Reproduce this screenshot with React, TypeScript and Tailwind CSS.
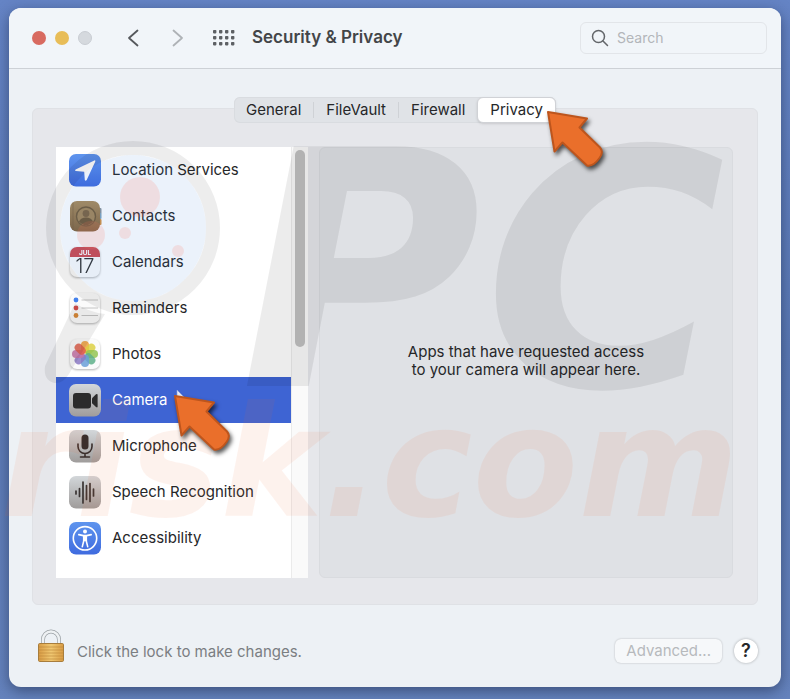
import React, { useState } from 'react';

interface Service {
  id: string;
  label: string;
  icon: React.ReactNode;
}

const TABS = ['General', 'FileVault', 'Firewall', 'Privacy'];

function GreyTile({ id, children }: { id: string; children: React.ReactNode }) {
  return (
    <svg viewBox="0 0 34 34" className="size-[34px]" aria-hidden="true">
      <defs>
        <linearGradient id={id} x1="0" y1="0" x2="0" y2="1">
          <stop offset="0" stopColor="#d3d7da" />
          <stop offset="1" stopColor="#9f9c9b" />
        </linearGradient>
      </defs>
      <rect x="1" y="1" width="32" height="32.5" rx="7" fill={`url(#${id})`} />
      {children}
    </svg>
  );
}

function BlueTile({ id, children }: { id: string; children: React.ReactNode }) {
  return (
    <svg viewBox="0 0 34 34" className="size-[34px]" aria-hidden="true">
      <defs>
        <linearGradient id={id} x1="0" y1="0" x2="0" y2="1">
          <stop offset="0" stopColor="#5f95ee" />
          <stop offset="1" stopColor="#3f6bdf" />
        </linearGradient>
      </defs>
      <rect x="1" y="1" width="32" height="32.5" rx="7" fill={`url(#${id})`} />
      {children}
    </svg>
  );
}

function WhiteTile({ children }: { children: React.ReactNode }) {
  return (
    <svg viewBox="0 0 34 34" className="size-[34px] drop-shadow-[0_1px_1px_rgba(0,0,0,0.3)]" aria-hidden="true">
      <rect x="2" y="2" width="30" height="30" rx="7" fill="#fbfbfb" />
      {children}
    </svg>
  );
}

const PETALS = ['#f0a03c', '#dcd044', '#93c452', '#5fb08a', '#6a9fd8', '#8b79c4', '#c874a8', '#e0604c'];

const SERVICES: Service[] = [
  {
    id: 'location',
    label: 'Location Services',
    icon: (
      <BlueTile id="tile-location">
        <path d="M26.3 7.4 7.6 16.4q-1.4 1.2.3 1.6l8.3.7.6 8.3q.7 1.5 1.9 0L27.3 8.4q.2-1.4-1-1Z" fill="#fff" />
      </BlueTile>
    ),
  },
  {
    id: 'contacts',
    label: 'Contacts',
    icon: (
      <svg viewBox="0 0 34 34" className="size-[34px]" aria-hidden="true">
        <defs>
          <linearGradient id="tile-contacts" x1="0" y1="0" x2="0" y2="1">
            <stop offset="0" stopColor="#ab8c5c" />
            <stop offset="1" stopColor="#84643c" />
          </linearGradient>
        </defs>
        <rect x="29" y="9" width="4.5" height="6" rx="1" fill="#8a949b" />
        <rect x="29" y="14" width="4.5" height="6" rx="1" fill="#7fa3bd" />
        <rect x="29" y="20" width="4.5" height="6" rx="1" fill="#d29042" />
        <rect x="2" y="2" width="30" height="30.5" rx="7" fill="url(#tile-contacts)" />
        <path d="M5 3.5V31" stroke="#775a36" strokeWidth="1" opacity=".5" />
        <circle cx="18" cy="17.5" r="9.5" fill="#a48659" stroke="#715a38" strokeWidth="1.4" />
        <circle cx="18" cy="14.5" r="3.4" fill="#7d6340" />
        <path d="M11 22.5q2-4 7-4t7 4q-3 3.7-7 3.7t-7-3.7Z" fill="#705735" />
      </svg>
    ),
  },
  {
    id: 'calendars',
    label: 'Calendars',
    icon: (
      <WhiteTile>
        <path d="M2 12V9a7 7 0 0 1 7-7h16a7 7 0 0 1 7 7v3Z" fill="#cf4a50" />
        <text x="17" y="9.5" textAnchor="middle" fontFamily="Inter, sans-serif" fontSize="6.5" fontWeight="700" fill="#fff">
          JUL
        </text>
        <text x="17" y="28" textAnchor="middle" fontFamily="Inter, sans-serif" fontSize="20" fontWeight="300" fill="#333">
          17
        </text>
      </WhiteTile>
    ),
  },
  {
    id: 'reminders',
    label: 'Reminders',
    icon: (
      <WhiteTile>
        <circle cx="8" cy="9" r="2.4" fill="#4381ec" />
        <circle cx="8" cy="17" r="2.4" fill="#d64f4b" />
        <circle cx="8" cy="24.5" r="2.4" fill="#d98a3b" />
        <path d="M13.5 9H30M13.5 17H30M13.5 24.5H30" stroke="#c4c4c4" strokeWidth="1" />
      </WhiteTile>
    ),
  },
  {
    id: 'photos',
    label: 'Photos',
    icon: (
      <WhiteTile>
        {PETALS.map((color, i) => (
          <rect
            key={color}
            x="13"
            y="4"
            width="8"
            height="12.4"
            rx="4"
            fill={color}
            opacity=".85"
            transform={`rotate(${i * 45} 17 17)`}
          />
        ))}
      </WhiteTile>
    ),
  },
  {
    id: 'camera',
    label: 'Camera',
    icon: (
      <GreyTile id="tile-camera">
        <rect x="5" y="10" width="18" height="15.5" rx="3" fill="#2b2b2b" />
        <path d="M24 15.2 28 11.3q1.6-1 1.6.7v11.4q0 1.7-1.6.7L24 20.3Z" fill="#2b2b2b" />
      </GreyTile>
    ),
  },
  {
    id: 'microphone',
    label: 'Microphone',
    icon: (
      <GreyTile id="tile-microphone">
        <rect x="13.5" y="5.5" width="7" height="15" rx="3.5" fill="#3a2e2b" />
        <path d="M10 15v2.5a7 7 0 0 0 14 0V15M17 24.5V28M12.5 28h9" fill="none" stroke="#3a2e2b" strokeWidth="1.6" strokeLinecap="round" />
      </GreyTile>
    ),
  },
  {
    id: 'speech',
    label: 'Speech Recognition',
    icon: (
      <GreyTile id="tile-speech">
        <path
          d="M8 16v3M11.5 13.5v8M15 7v21M18.5 10.5v14M22 8.5v18M25.5 14v7"
          stroke="#3a3433"
          strokeWidth="1.7"
          strokeLinecap="round"
        />
      </GreyTile>
    ),
  },
  {
    id: 'accessibility',
    label: 'Accessibility',
    icon: (
      <BlueTile id="tile-accessibility">
        <circle cx="17" cy="17.3" r="11.7" fill="none" stroke="#fff" strokeWidth="1.6" />
        <circle cx="17" cy="10.6" r="2" fill="#fff" />
        <path
          d="M10.8 13.6 15.4 14.6h3.2L23.2 13.6M15.8 19.6 14.3 25.6M18.2 19.6 19.7 25.6"
          fill="none"
          stroke="#fff"
          strokeWidth="1.6"
          strokeLinecap="round"
          strokeLinejoin="round"
        />
        <path d="M14.9 14.2h4.2v6h-4.2Z" fill="#fff" />
      </BlueTile>
    ),
  },
];

function PointerArrow({ className }: { className: string }) {
  return (
    <svg
      viewBox="0 0 64 66"
      className={`pointer-events-none absolute z-20 h-[66px] w-16 drop-shadow-[2px_3px_2px_rgba(0,0,0,0.65)] ${className}`}
      aria-hidden="true"
    >
      <path
        d="M4 5 43 11.5 35.5 20.5 56 40.5Q60 45 55.5 51 49 60 43 58.5L18.5 35.5 10.5 44.5Z"
        fill="#ea6f2b"
        stroke="#bd551d"
        strokeWidth="2"
        strokeLinejoin="round"
      />
    </svg>
  );
}

function Watermark() {
  return (
    <svg viewBox="0 0 790 699" className="pointer-events-none absolute inset-0 z-10 h-full w-full" aria-hidden="true">
      <circle cx="133" cy="228" r="73" fill="#3c82dc" opacity=".1" />
      <circle cx="133" cy="228" r="80" fill="none" stroke="#000" strokeWidth="14" opacity=".07" />
      <path d="M75 303 45 366Q43 380 54 383q9 1 15-9l36-60Q88 312 75 303Z" opacity=".07" />
      <g fill="#ff6e55" opacity=".15">
        <circle cx="140" cy="197" r="20" />
        <circle cx="91" cy="235" r="14" />
        <circle cx="125" cy="233" r="6" />
        <circle cx="178" cy="251" r="6" />
      </g>
      <g fontFamily="'DejaVu Sans', sans-serif" fontWeight="700" fontStyle="italic">
        <text x="240" y="386" fontSize="329" opacity=".07">P</text>
        <text x="484" y="386" fontSize="329" opacity=".07">C</text>
        <text x="0" y="516" fontSize="154" fill="#f0642d" opacity=".08">risk.com</text>
      </g>
    </svg>
  );
}

function TitleBar() {
  return (
    <header className="flex h-[61px] items-center rounded-t-xl border-b border-[#cdd1d6] bg-[#f1f5f9] pr-3.5 pl-[23px]">
      <div className="flex gap-[9px]">
        <button type="button" aria-label="Close" className="size-3.5 rounded-full bg-[#d86a60]" />
        <button type="button" aria-label="Minimize" className="size-3.5 rounded-full bg-[#e8bd58]" />
        <button type="button" aria-label="Zoom" className="size-3.5 rounded-full border border-[#c9cdd3] bg-[#d5d9de]" />
      </div>
      <div className="ml-8 flex gap-6">
        <button type="button" aria-label="Back">
          <svg viewBox="0 0 20 20" className="size-5" fill="none" stroke="#55585c" strokeWidth="1.8" strokeLinecap="round" strokeLinejoin="round">
            <path d="M13.5 2.5 5 10l8.5 7.5" />
          </svg>
        </button>
        <button type="button" aria-label="Forward" disabled>
          <svg viewBox="0 0 20 20" className="size-5" fill="none" stroke="#aeb2b6" strokeWidth="1.8" strokeLinecap="round" strokeLinejoin="round">
            <path d="M5.5 2.5 14 10 5.5 17.5" />
          </svg>
        </button>
      </div>
      <button type="button" aria-label="Show all" className="ml-[25px]">
        <svg viewBox="0 0 22 16" className="h-4 w-[22px]" fill="#5d6064">
          {[0, 6, 12].map((y) =>
            [0, 6, 12, 18].map((x) => <rect key={`${x}-${y}`} x={x} y={y} width="3.4" height="3.4" rx=".8" />)
          )}
        </svg>
      </button>
      <h1 className="ml-[17px] text-[17px] font-semibold text-[#434548]">Security &amp; Privacy</h1>
      <label className="ml-auto flex h-8 w-[187px] items-center gap-2 rounded-md border border-[#e2e5e9] px-2.5">
        <svg viewBox="0 0 18 18" className="size-[18px] shrink-0" fill="none" stroke="#63666a" strokeWidth="1.5" strokeLinecap="round">
          <circle cx="7.5" cy="7.5" r="6" />
          <path d="m12 12 4.5 4.5" />
        </svg>
        <input
          type="search"
          aria-label="Search"
          placeholder="Search"
          className="w-full min-w-0 bg-transparent text-sm outline-none placeholder:text-[#b3b6ba]"
        />
      </label>
    </header>
  );
}

function LockIcon() {
  return (
    <svg viewBox="0 0 28 34" className="h-[34px] w-7" aria-hidden="true">
      <defs>
        <linearGradient id="lock-body" x1="0" y1="0" x2="1" y2="0">
          <stop offset="0" stopColor="#d99c44" />
          <stop offset=".5" stopColor="#f0c872" />
          <stop offset="1" stopColor="#d99c44" />
        </linearGradient>
      </defs>
      <path d="M6 15v-4.5a8 8 0 0 1 16 0V15" fill="none" stroke="#999fa3" strokeWidth="4" />
      <path d="M6 15v-4.5a8 8 0 0 1 16 0V15" fill="none" stroke="#eef1f3" strokeWidth="2.6" />
      <rect x="1.5" y="14.5" width="25" height="18" rx="1.2" fill="url(#lock-body)" stroke="#a87d3c" />
      <path d="M2 18h24M2 21h24M2 24h24M2 27h24M2 30h24" stroke="#b98338" strokeWidth=".8" opacity=".75" />
    </svg>
  );
}

export default function App() {
  const [tab, setTab] = useState('Privacy');
  const [selected, setSelected] = useState('camera');

  return (
    <div className="relative min-h-screen bg-linear-to-b from-[#6584c5] via-[#5a79b4] to-[#6583bd] px-[9px] pt-2 pb-3 font-[Inter,sans-serif] text-[#262729]">
      <main className="rounded-xl bg-[#edf1f5] shadow-[0_4px_14px_rgba(20,30,60,0.5)]">
        <TitleBar />

        <div className="px-[23px] pt-7 pb-6">
          <div role="tablist" className="relative mx-auto -mb-[15px] flex h-[26px] w-fit rounded-md bg-[#e0e3e7] ring-1 ring-[#d9dce0] ring-inset">
            {TABS.map((name, i) => (
              <div key={name} className="relative flex items-center">
                {i > 0 && i < TABS.length - 1 && <span className="h-4 w-px bg-[#cfd2d6]" />}
                <button
                  type="button"
                  role="tab"
                  aria-selected={tab === name}
                  onClick={() => setTab(name)}
                  className={
                    tab === name
                      ? 'h-full rounded-md border border-[#d0d2d6] bg-white px-3 text-[15px] shadow-sm'
                      : 'h-full px-3 text-[15px]'
                  }
                >
                  {name}
                </button>
                {name === 'Privacy' && <PointerArrow className="top-2.5 left-[67px]" />}
              </div>
            ))}
          </div>

          <section className="flex gap-[11px] rounded-md border border-[#dfe1e5] bg-[#e6e7eb] pt-[38px] pr-6 pb-[26px] pl-[23px]">
            <div className="flex w-[252px] shrink-0 bg-white">
              <ul className="flex-1 pb-[17px]">
                {SERVICES.map(({ id, label, icon }) => (
                  <li key={id} className="relative">
                    <button
                      type="button"
                      onClick={() => setSelected(id)}
                      className={
                        selected === id
                          ? 'flex h-[46px] w-full items-center gap-2.5 bg-[#3e64d3] pl-3 text-left text-[15px] text-white'
                          : 'flex h-[46px] w-full items-center gap-2.5 pl-3 text-left text-[15px]'
                      }
                    >
                      {icon}
                      {label}
                    </button>
                    {id === 'camera' && (
                      <>
                        <svg viewBox="0 0 12 18" className="absolute top-3 left-[120px] h-[18px] w-3" aria-hidden="true">
                          <path d="M1 1v14l3.5-3.5L11 11Z" fill="#e9ecf6" stroke="#8fa3dc" strokeWidth=".6" />
                        </svg>
                        <PointerArrow className="top-3.5 left-[115px]" />
                      </>
                    )}
                  </li>
                ))}
              </ul>
              <div className="w-[17px] border-l border-[#ebebeb] bg-[#fafafa] pt-[3px] pl-[3px]">
                <div className="h-[197px] w-2.5 rounded-full bg-[#c1c1c1]" />
              </div>
            </div>

            <div className="flex flex-1 items-center justify-center rounded-md border border-[#d9dbdf] bg-[#dfe1e5]">
              <p className="pb-1 text-center text-[15px] leading-[18px]">
                Apps that have requested access
                <br />
                to your camera will appear here.
              </p>
            </div>
          </section>

          <footer className="mt-6 flex items-end pl-[5px]">
            <button type="button" className="flex items-end gap-3 text-[15px] text-[#7b7e82]">
              <LockIcon />
              Click the lock to make changes.
            </button>
            <button
              type="button"
              disabled
              className="ml-auto h-6 rounded-md bg-[#f6f8fa] px-[11px] text-[15px] text-[#b7babd] shadow-[0_0_2px_rgba(0,0,0,0.25)]"
            >
              Advanced...
            </button>
            <button
              type="button"
              aria-label="Help"
              className="ml-3 size-6 rounded-full bg-white text-lg leading-6 font-semibold shadow-[0_0_3px_rgba(0,0,0,0.3)]"
            >
              ?
            </button>
          </footer>
        </div>
      </main>
      <Watermark />
    </div>
  );
}
